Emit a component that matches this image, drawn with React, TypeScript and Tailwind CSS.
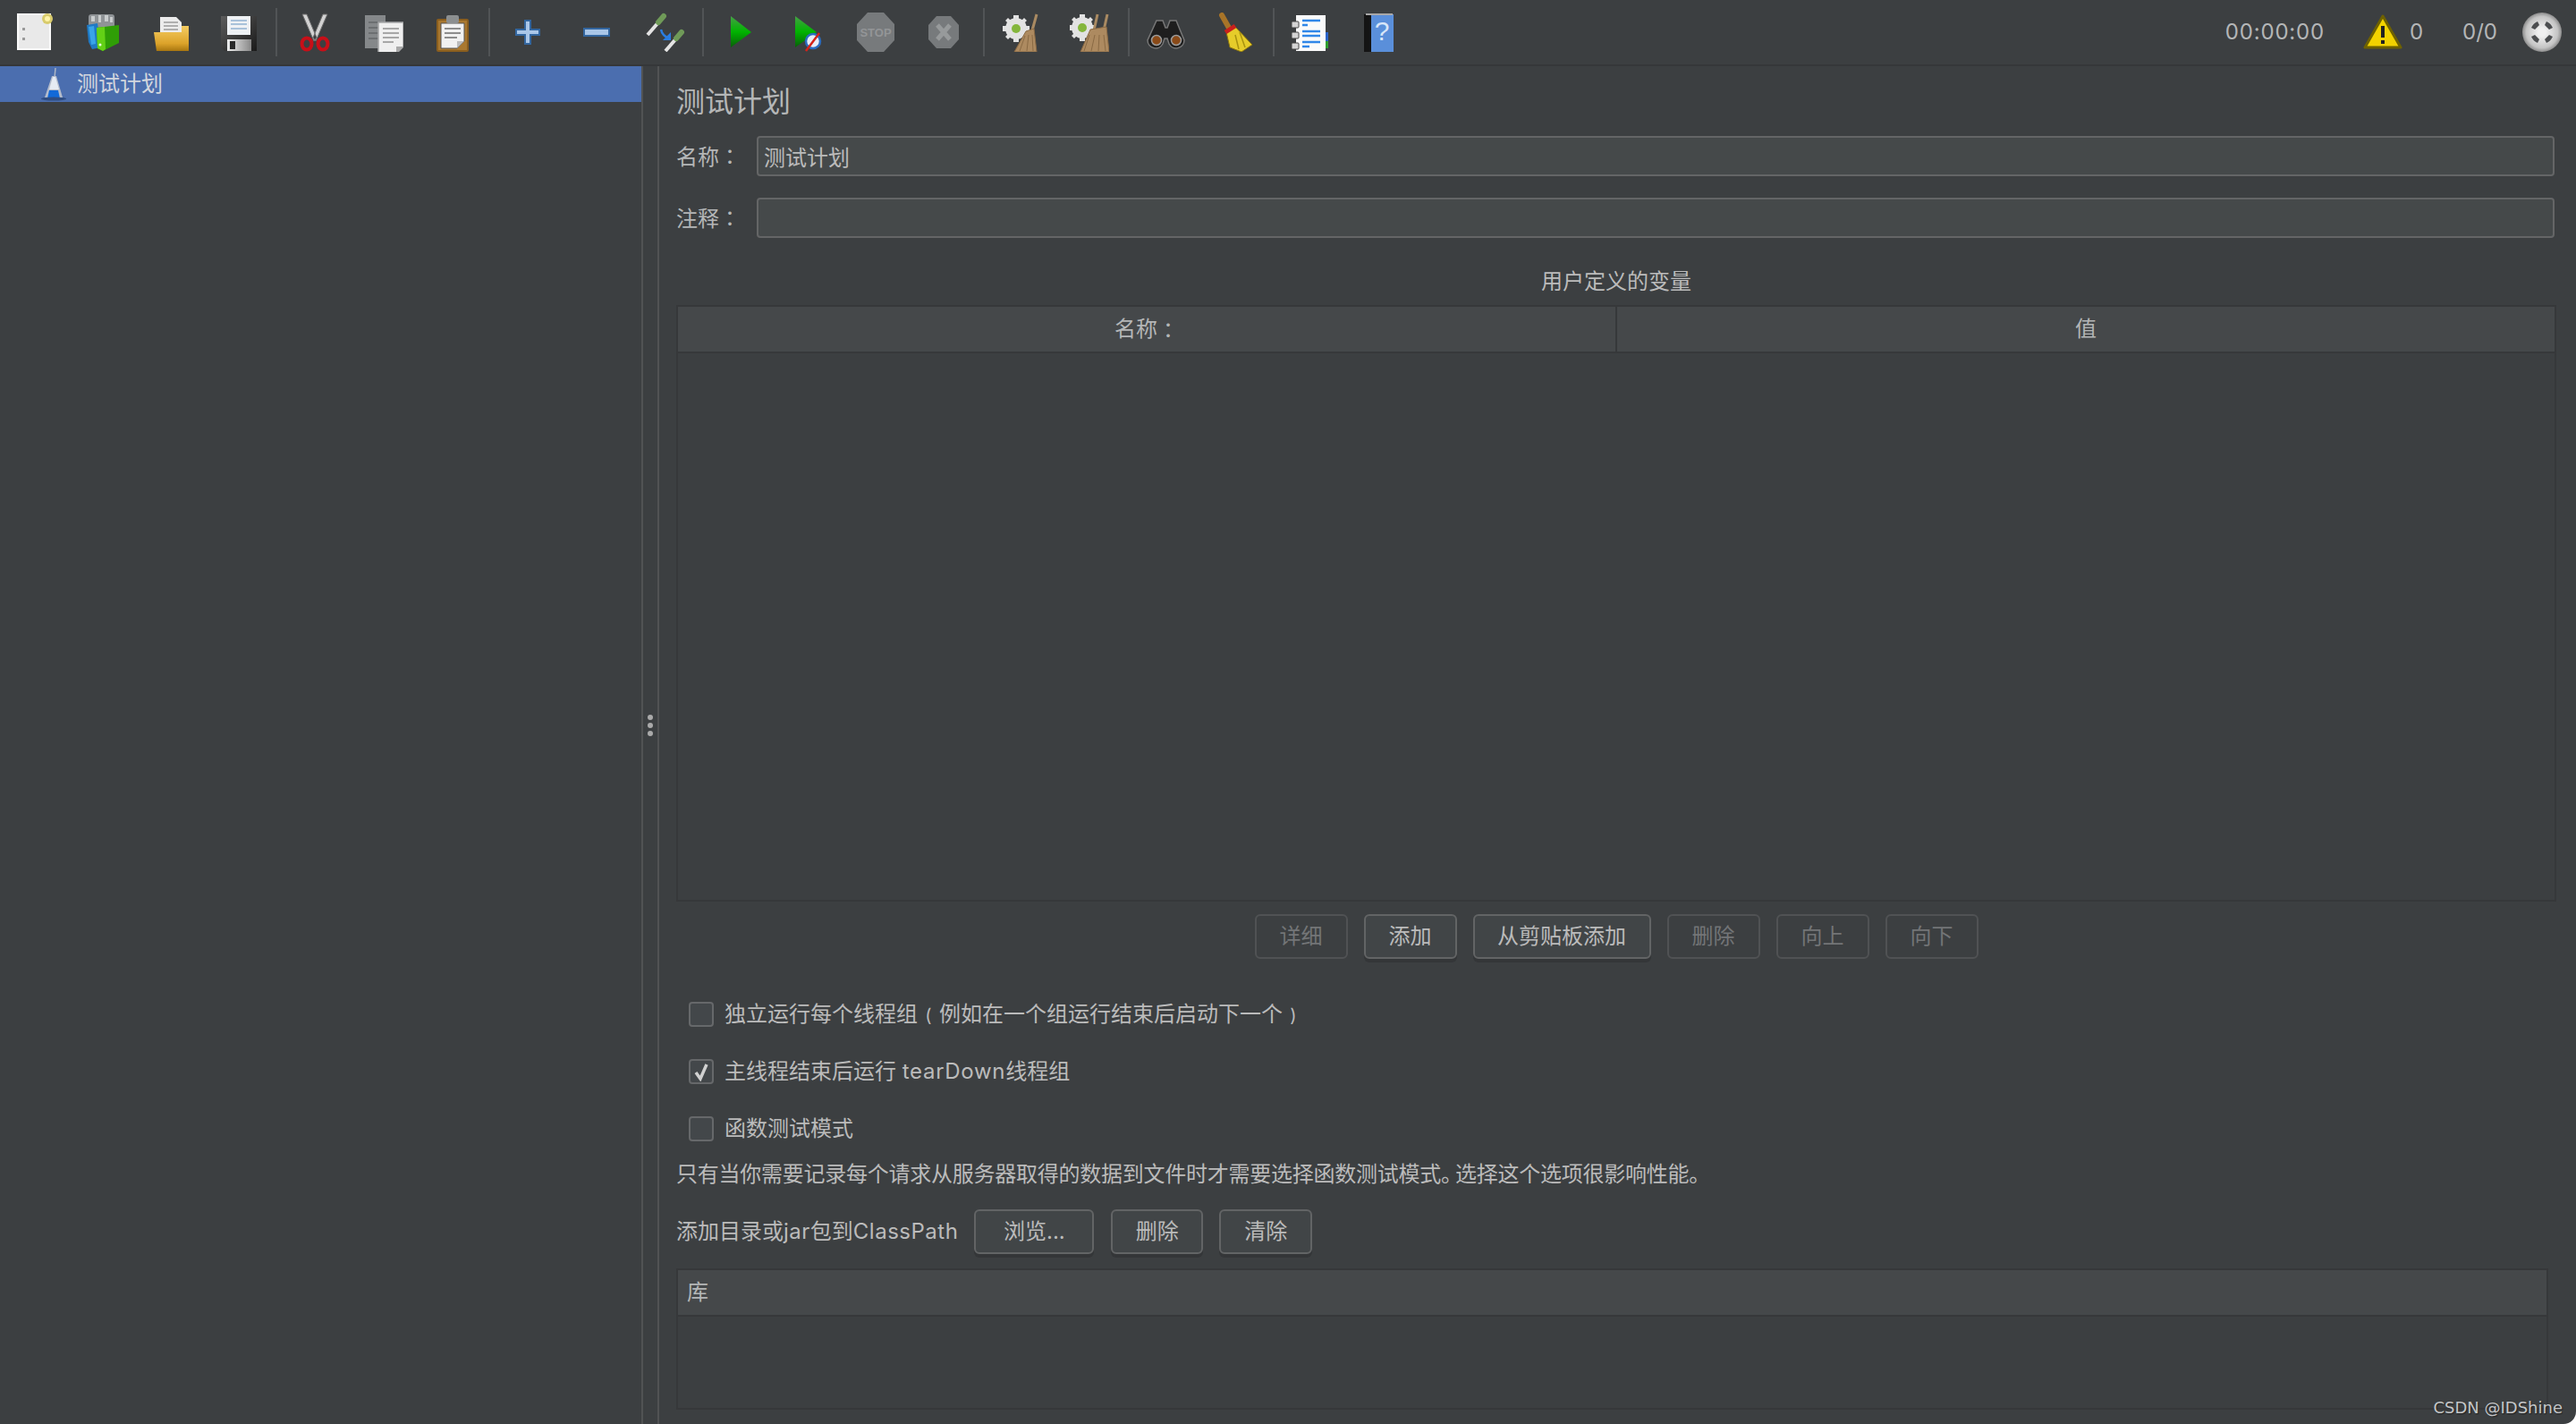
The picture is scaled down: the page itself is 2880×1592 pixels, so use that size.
import React from 'react';

const font = 'font-["Inter","Noto_Sans_CJK_SC",sans-serif]';

const Box = ({ w = 44, h = 44, children }: { w?: number; h?: number; children: React.ReactNode }) => (
  <svg width={w} height={h} viewBox={`0 0 ${w} ${h}`} className="block">
    {children}
  </svg>
);

const NewIcon = () => (
  <Box>
    <rect x="3" y="2" width="36" height="39" fill="#e9e9e9" stroke="#fafafa" strokeWidth="2" />
    <circle cx="36" cy="7" r="6" fill="#d8cb6c" />
    <circle cx="36" cy="7" r="3" fill="#fff4a8" />
    <rect x="8" y="17" width="3" height="3" fill="#9a9a9a" />
    <rect x="8" y="28" width="3" height="3" fill="#9a9a9a" />
  </Box>
);

const TemplatesIcon = () => (
  <Box>
    <rect x="6" y="2" width="29" height="18" rx="3" fill="#8f9396" />
    <path d="M9 4h4v6H9zM17 3h3v8h-3zM24 3h4v7h-4zM30 5h3v6h-3z" fill="#c9cccd" />
    <path d="M4 14l12-2 4 27-10 2-4-8z" fill="#1f79c4" />
    <path d="M6 16l6-1 2 20-5 1z" fill="#39a4e8" />
    <path d="M15 17l25-3v20l-18 9-6-3z" fill="#2f9e06" />
    <path d="M15 17l9-1 1 25-3 2-6-3z" fill="#63d116" />
    <circle cx="19" cy="36" r="1.5" fill="#e8ffe0" />
  </Box>
);

const OpenIcon = () => (
  <Box>
    <path d="M10 5h18l6 6v18H10z" fill="#ececec" />
    <path d="M14 11h16M14 15h16M14 19h16" stroke="#9a9a9a" strokeWidth="1.5" />
    <path d="M34 15h8v28H6L3 22h31z" fill="url(#openFill)" />
    <defs>
      <linearGradient id="openFill" x1="0" y1="0" x2="0" y2="1">
        <stop offset="0" stopColor="#f4cc62" />
        <stop offset="0.7" stopColor="#dca32a" />
        <stop offset="1" stopColor="#a87610" />
      </linearGradient>
    </defs>
  </Box>
);

const SaveIcon = () => (
  <Box>
    <path d="M2 4h40v39H6l-4-4z" fill="url(#saveBody)" />
    <rect x="9" y="4" width="26" height="21" fill="#eef1f4" />
    <path d="M13 9h18M13 13h18M13 18h18" stroke="#a9c2da" strokeWidth="2" />
    <rect x="9" y="30" width="27" height="13" fill="url(#saveFill)" />
    <rect x="12" y="32" width="6" height="9" fill="#2a2a2a" />
    <defs>
      <linearGradient id="saveBody" x1="0" y1="0" x2="1" y2="1">
        <stop offset="0" stopColor="#5c5c5c" />
        <stop offset="1" stopColor="#1a1a1a" />
      </linearGradient>
      <linearGradient id="saveFill" x1="0" y1="0" x2="1" y2="0">
        <stop offset="0" stopColor="#eee" />
        <stop offset="1" stopColor="#888" />
      </linearGradient>
    </defs>
  </Box>
);

const CutIcon = () => (
  <Box>
    <path d="M8 2l5 0 11 26-3 4zM36 2l-5 0-11 26 3 4z" fill="#d2d2d2" stroke="#6c6c6c" strokeWidth="1" />
    <ellipse cx="13" cy="35" rx="5.5" ry="6.5" fill="none" stroke="#c80f18" strokeWidth="4" />
    <ellipse cx="31" cy="35" rx="5.5" ry="6.5" fill="none" stroke="#c80f18" strokeWidth="4" />
  </Box>
);

const CopyIcon = () => (
  <Box>
    <rect x="1" y="3" width="23" height="37" fill="#85888a" />
    <path d="M5 11h14M5 17h14M5 23h14M5 29h14" stroke="#6c6f71" strokeWidth="2" />
    <path d="M16 11h28v27l-8 8H16z" fill="#efefef" stroke="#a5a7a8" strokeWidth="1.5" />
    <path d="M21 18h18M21 23h18M21 28h18M21 33h12" stroke="#a7a7a7" strokeWidth="2" />
    <path d="M36 46v-8h8z" fill="#a8a8a8" />
  </Box>
);

const PasteIcon = () => (
  <Box>
    <rect x="4" y="7" width="36" height="37" rx="2" fill="#8a5e1e" />
    <rect x="6" y="9" width="32" height="33" fill="#a97830" />
    <path d="M9 12h26v20l-8 8H9z" fill="#f1f1f1" stroke="#555" strokeWidth="1" />
    <rect x="15" y="3" width="14" height="9" rx="2" fill="#8c8f90" />
    <path d="M13 18h18M13 23h18M13 28h14" stroke="#8d8d8d" strokeWidth="2" />
    <path d="M27 40v-8h8z" fill="#bcbcbc" />
  </Box>
);

const PlusIcon = () => (
  <Box>
    <path d="M19 9h6v10h10v6H25v10h-6V25H9v-6h10z" fill="#a9c6e8" stroke="#33669f" strokeWidth="2" />
  </Box>
);

const MinusIcon = () => (
  <Box>
    <rect x="8" y="18" width="28" height="8" fill="#a9c6e8" stroke="#33669f" strokeWidth="2" />
  </Box>
);

const ToggleIcon = () => (
  <Box>
    <path d="M2 25l13-15" stroke="#e4e4e4" strokeWidth="4" />
    <path d="M14 11l6-7" stroke="#6f9a58" strokeWidth="6" strokeLinecap="round" />
    <path d="M22 43l13-15" stroke="#e4e4e4" strokeWidth="4" />
    <path d="M34 29l6-7" stroke="#6f9a58" strokeWidth="6" strokeLinecap="round" />
    <path d="M17 19c1 5 4 8 9 10" fill="none" stroke="#2a7de1" strokeWidth="2.5" />
    <path d="M28 22v9h-9z" fill="#2a7de1" />
  </Box>
);

const PlayGradient = ({ id }: { id: string }) => (
  <defs>
    <linearGradient id={id} x1="0" y1="0" x2="0" y2="1">
      <stop offset="0" stopColor="#46a046" />
      <stop offset="0.5" stopColor="#00b400" />
      <stop offset="1" stopColor="#0a5e0a" />
    </linearGradient>
  </defs>
);

const PlayIcon = () => (
  <Box>
    <PlayGradient id="playFill" />
    <path d="M12 4l23 18-23 17z" fill="url(#playFill)" />
  </Box>
);

const PlayNoTimersIcon = () => (
  <Box>
    <PlayGradient id="playFill2" />
    <path d="M8 4l24 18-24 17z" fill="url(#playFill2)" />
    <circle cx="28" cy="32" r="8" fill="#e8eef8" stroke="#2a6cc0" strokeWidth="2.5" />
    <path d="M20 43l15-20" stroke="#d4231a" strokeWidth="2.5" />
  </Box>
);

const StopIcon = () => (
  <Box>
    <path d="M13 0h18l12 13v18L31 44H13L1 31V13z" fill="#777a7c" />
    <text x="22" y="27" textAnchor="middle" fontSize="13" fontWeight="700" fill="#939597" fontFamily="Liberation Sans, sans-serif">
      STOP
    </text>
  </Box>
);

const ShutdownIcon = () => (
  <Box>
    <path d="M14 4h16l9 10v16l-9 10H14L5 30V14z" fill="#777a7c" />
    <path d="M15 14l14 16M29 14L15 30" stroke="#979a9b" strokeWidth="5" />
  </Box>
);

const Gear = ({ x, y }: { x: number; y: number }) => (
  <g transform={`translate(${x} ${y})`}>
    <circle r="12" fill="#e2e2e2" />
    <path d="M-3-15h6v30h-6zM-15-3h30v6h-30zM-12-9l3-3 21 21-3 3zM9-12l3 3-21 21-3-3z" fill="#e2e2e2" />
    <circle r="5" fill="#84b63c" />
  </g>
);

const Bristles = ({ d }: { d: string }) => <path d={d} fill="#ad8a60" stroke="#8a6a44" strokeWidth="1" />;

const ClearIcon = () => (
  <Box>
    <Gear x={19} y={18} />
    <path d="M42 2l-5 18" stroke="#a98a62" strokeWidth="3" />
    <Bristles d="M30 21l9-3 3 26H17z" />
    <path d="M29 26l-6 17M33 25l-2 18M37 25l1 18" stroke="#8a6a44" strokeWidth="1" />
  </Box>
);

const ClearAllIcon = () => (
  <Box>
    <Gear x={14} y={17} />
    <path d="M31 2l-4 18M42 2l-4 18" stroke="#a98a62" strokeWidth="3" />
    <Bristles d="M23 19l18-3 3 28H12z" />
    <path d="M22 25l-6 18M28 25l-4 18M33 25l-1 18M38 25l2 18" stroke="#8a6a44" strokeWidth="1" />
  </Box>
);

const BinocularsIcon = () => (
  <Box>
    <path d="M11 9h7l3 8h2l3-8h7l9 22a9 9 0 0 1-17 4l-2-6h-3l-2 6a9 9 0 0 1-17-4z" fill="#1e1e1e" stroke="#777" strokeWidth="1.5" />
    <circle cx="11" cy="31" r="5.5" fill="#8a4a18" stroke="#9a9a9a" strokeWidth="1.5" />
    <circle cx="33" cy="31" r="5.5" fill="#8a4a18" stroke="#9a9a9a" strokeWidth="1.5" />
  </Box>
);

const BroomIcon = () => (
  <Box>
    <path d="M8 3l9 16" stroke="#a87428" strokeWidth="6" strokeLinecap="round" />
    <path d="M13 22l10-6 19 20-12 8-13-5z" fill="#e6cc2a" stroke="#8a7410" strokeWidth="1" />
    <path d="M23 25l4 16M28 22l6 17" stroke="#a8920f" strokeWidth="1.5" />
    <path d="M12 22l11-7" stroke="#c8201c" strokeWidth="5" />
  </Box>
);

const LogIcon = () => (
  <Box>
    <rect x="37" y="22" width="5" height="10" fill="#2a63c8" />
    <rect x="37" y="32" width="5" height="8" fill="#2f9e2f" />
    <rect x="6" y="3" width="33" height="40" fill="#fafafa" />
    <rect x="1" y="10" width="8" height="7" rx="1" fill="#d4d4d4" stroke="#444" />
    <rect x="1" y="22" width="8" height="7" rx="1" fill="#d4d4d4" stroke="#444" />
    <rect x="1" y="34" width="8" height="7" rx="1" fill="#d4d4d4" stroke="#444" />
    <path d="M13 9h20M13 14h6M13 21h20M13 26h20M13 33h20M13 38h8" stroke="#2f86e8" strokeWidth="2.5" />
  </Box>
);

const HelpIcon = () => (
  <Box>
    <rect x="6" y="2" width="33" height="42" fill="#5a8fda" />
    <rect x="6" y="2" width="8" height="42" fill="#141414" />
    <rect x="8" y="1" width="30" height="2" fill="#a8a8a8" />
    <text x="26" y="31" textAnchor="middle" fontSize="30" fill="#d8e6f8" fontFamily="Liberation Sans, sans-serif">
      ?
    </text>
  </Box>
);

const WarningIcon = () => (
  <svg width="44" height="40" viewBox="0 0 44 40" className="block">
    <path d="M22 2l20 35H2z" fill="#f2d200" stroke="#6e6100" strokeWidth="3" strokeLinejoin="round" />
    <rect x="20" y="13" width="4" height="13" fill="#222" />
    <rect x="20" y="29" width="4" height="4" fill="#222" />
  </svg>
);

const RemoteIcon = () => (
  <Box>
    <defs>
      <radialGradient id="remoteFill">
        <stop offset="0.2" stopColor="#f0f0f0" />
        <stop offset="0.8" stopColor="#c4c4c4" />
        <stop offset="1" stopColor="#8c8c8c" />
      </radialGradient>
    </defs>
    <circle cx="22" cy="22" r="22" fill="url(#remoteFill)" />
    <path d="M10 17a14 14 0 0 1 7-7l2 4-5 5zM34 17a14 14 0 0 0-7-7l-2 4 5 5zM10 27a14 14 0 0 0 7 7l2-4-5-5zM34 27a14 14 0 0 1-7 7l-2-4 5-5z" fill="#4c4e50" />
  </Box>
);

const FlaskIcon = () => (
  <svg width="30" height="38" viewBox="0 0 30 38" className="block">
    <path d="M17 1l-1 11" stroke="#aeb6c6" strokeWidth="1.5" />
    <path d="M13 10h5l7 24H5z" fill="#b4bccc" />
    <path d="M14 11h3l4 14H10z" fill="#e6ebf3" />
    <path d="M10 26h10l2 9H8z" fill="#1269d8" />
    <ellipse cx="15" cy="35.5" rx="14" ry="2" fill="#2f4d82" />
  </svg>
);

const Tool = ({ className, children }: { className: string; children: React.ReactNode }) => (
  <div className={`${className} h-[44px] flex justify-center items-center shrink-0`}>{children}</div>
);

const Sep = ({ className }: { className: string }) => (
  <div className={`${className} w-[2px] h-[54px] bg-[#515456] shrink-0`} />
);

const Toolbar = () => (
  <div className="h-[74px] shrink-0 border-b-2 border-[#353739] flex items-center pl-[1px] pb-[1px]">
    <Tool className="w-[76px]"><NewIcon /></Tool>
    <Tool className="w-[76px]"><TemplatesIcon /></Tool>
    <Tool className="w-[76px]"><OpenIcon /></Tool>
    <Tool className="w-[76px]"><SaveIcon /></Tool>
    <Sep className="ml-[3px] mr-[3px]" />
    <Tool className="w-[77px]"><CutIcon /></Tool>
    <Tool className="w-[77px]"><CopyIcon /></Tool>
    <Tool className="w-[77px]"><PasteIcon /></Tool>
    <Sep className="ml-[2px] mr-[3px]" />
    <Tool className="w-[77px]"><PlusIcon /></Tool>
    <Tool className="w-[77px]"><MinusIcon /></Tool>
    <Tool className="w-[77px]"><ToggleIcon /></Tool>
    <Sep className="ml-[3px] mr-[2px]" />
    <Tool className="w-[76px]"><PlayIcon /></Tool>
    <Tool className="w-[76px]"><PlayNoTimersIcon /></Tool>
    <Tool className="w-[76px]"><StopIcon /></Tool>
    <Tool className="w-[76px]"><ShutdownIcon /></Tool>
    <Sep className="ml-[6px]" />
    <Tool className="w-[76px]"><ClearIcon /></Tool>
    <Tool className="w-[82px]"><ClearAllIcon /></Tool>
    <Sep className="ml-[2px] mr-[3px]" />
    <Tool className="w-[76px]"><BinocularsIcon /></Tool>
    <Tool className="w-[76px]"><BroomIcon /></Tool>
    <Sep className="ml-[5px] mr-[2px]" />
    <Tool className="w-[76px]"><LogIcon /></Tool>
    <Tool className="w-[76px]"><HelpIcon /></Tool>
    <div className="ml-auto flex items-center pr-[16px] text-[24px] text-[#b4b6b7]">
      <span className="tracking-[0.8px]">00:00:00</span>
      <span className="ml-[43px]"><WarningIcon /></span>
      <span className="ml-[8px]">0</span>
      <span className="ml-[44px]">0/0</span>
      <span className="ml-[28px]"><RemoteIcon /></span>
    </div>
  </div>
);

const Btn = ({ label, disabled, className }: { label: string; disabled?: boolean; className: string }) => (
  <button
    disabled={disabled}
    className={
      disabled
        ? `${className} h-[50px] rounded-[6px] border-2 border-[#505254] text-[24px] text-[#737577]`
        : `${className} h-[50px] rounded-[6px] border-2 border-[#626465] bg-[#414547] text-[24px] text-[#bbbbbb] shadow-[0_4px_0_#343638]`
    }
  >
    {label}
  </button>
);

// colon sits centred in its cell on the screenshot, the TC face does that
const Colon = () => <span className='font-["Noto_Sans_CJK_TC"]'>：</span>;

const Field = ({ label, value, className }: { label: string; value: string; className: string }) => (
  <div className={`${className} flex items-center`}>
    <label className="w-[90px] shrink-0 text-[24px] text-[#b4b6b7]">{label}<Colon /></label>
    <input
      readOnly
      value={value}
      className="flex-1 mr-[2px] h-[45px] rounded-[4px] border-2 border-[#646566] bg-[#45494a] px-[6px] text-[24px] text-[#bbbbbb] outline-none"
    />
  </div>
);

const Check = ({ children, checked, className }: { children: React.ReactNode; checked?: boolean; className: string }) => (
  <label className={`${className} flex items-center h-[28px] pl-[14px] text-[24px] text-[#bbbbbb]`}>
    <span className="w-[28px] h-[28px] rounded-[4px] border-2 border-[#66686a] bg-[#43474a] flex items-center justify-center">
      {checked && (
        <svg width="20" height="22" viewBox="0 0 20 22">
          <path d="M4 12l5 7 7-16" fill="none" stroke="#d0d0d0" strokeWidth="3.5" />
        </svg>
      )}
    </span>
    <span className="ml-[12px] whitespace-nowrap">{children}</span>
  </label>
);

const App = () => (
  <div className={`${font} relative w-[2880px] h-[1592px] overflow-hidden rounded-br-[14px] bg-[#3c3f41] flex flex-col`}>
    <Toolbar />
    <div className="flex-1 flex min-h-0">
      <div className="w-[717px] shrink-0">
        <div className="h-[40px] bg-[#4b6eaf] flex items-center pl-[45px] text-[24px] text-[#d2d6de]">
          <FlaskIcon />
          <span className="ml-[11px]">测试计划</span>
        </div>
      </div>
      <div className="w-[20px] shrink-0 border-x-2 border-[#515354] flex flex-col items-center justify-center gap-[3px] pb-[44px]">
        <span className="w-[6px] h-[6px] rounded-full bg-[#aaaaaa]" />
        <span className="w-[6px] h-[6px] rounded-full bg-[#aaaaaa]" />
        <span className="w-[6px] h-[6px] rounded-full bg-[#aaaaaa]" />
      </div>
      <div className="flex-1 flex flex-col min-w-0 pl-[19px] pr-[22px]">
        <h1 className="mt-[20px] h-[40px] leading-[40px] text-[32px] text-[#b4b6b7]">测试计划</h1>
        <Field className="mt-[18px]" label="名称" value="测试计划" />
        <Field className="mt-[24px]" label="注释" value="" />
        <div className="mt-[33px] h-[32px] leading-[32px] text-center text-[24px] text-[#bbbbbb]">用户定义的变量</div>
        <div className="mt-[10px] h-[667px] shrink-0 border-2 border-[#36383a] flex flex-col">
          <div className="h-[50px] shrink-0 bg-[#45484a] border-b-2 border-[#36383a] box-content flex text-[24px] text-[#b4b6b7]">
            <div className="flex-1 flex items-center justify-center border-r-2 border-[#36383a]">名称<Colon /></div>
            <div className="flex-1 flex items-center justify-center">值</div>
          </div>
        </div>
        <div className="mt-[14px] flex justify-center gap-[18px]">
          <Btn disabled className="w-[104px]" label="详细" />
          <Btn className="w-[104px]" label="添加" />
          <Btn className="w-[199px]" label="从剪贴板添加" />
          <Btn disabled className="w-[104px]" label="删除" />
          <Btn disabled className="w-[104px]" label="向上" />
          <Btn disabled className="w-[104px]" label="向下" />
        </div>
        <Check className="mt-[48px]">
          独立运行每个线程组<span className="inline-block w-[24px] text-center text-[20px]">(</span>例如在一个组运行结束后启动下一个<span className="inline-block w-[24px] text-center text-[20px]">)</span>
        </Check>
        <Check className="mt-[36px]" checked>
          主线程结束后运行 <span className="tracking-[0.7px]">tearDown</span>线程组
        </Check>
        <Check className="mt-[36px]">函数测试模式</Check>
        <p className="mt-[21px] h-[32px] leading-[32px] whitespace-nowrap text-[24px] tracking-[-0.25px] text-[#bbbbbb]">
          只有当你需要记录每个请求从服务器取得的数据到文件时才需要选择函数测试模式<span className="tracking-[-8px]">。</span>选择这个选项很影响性能。
        </p>
        <div className="mt-[23px] flex items-center text-[24px] text-[#bbbbbb]">
          <span>添加目录或<span className="tracking-[0.5px]">jar</span>包到<span className="tracking-[0.5px]">ClassPath</span></span>
          <Btn className="ml-[18px] w-[134px]" label="浏览..." />
          <Btn className="ml-[19px] w-[103px]" label="删除" />
          <Btn className="ml-[18px] w-[104px]" label="清除" />
        </div>
        <div className="mt-[16px] mr-[9px] h-[158px] shrink-0 border-2 border-[#36383a]">
          <div className="h-[50px] bg-[#45484a] border-b-2 border-[#36383a] box-content flex items-center pl-[10px] text-[24px] text-[#b4b6b7]">库</div>
        </div>
      </div>
    </div>
    <span className="absolute right-[15px] bottom-[6px] text-[18px] leading-[24px] font-['DejaVu_Sans'] text-[#c4c6c8] [text-shadow:1px_1px_1px_#222]">
      CSDN @IDShine
    </span>
  </div>
);

export default App;
